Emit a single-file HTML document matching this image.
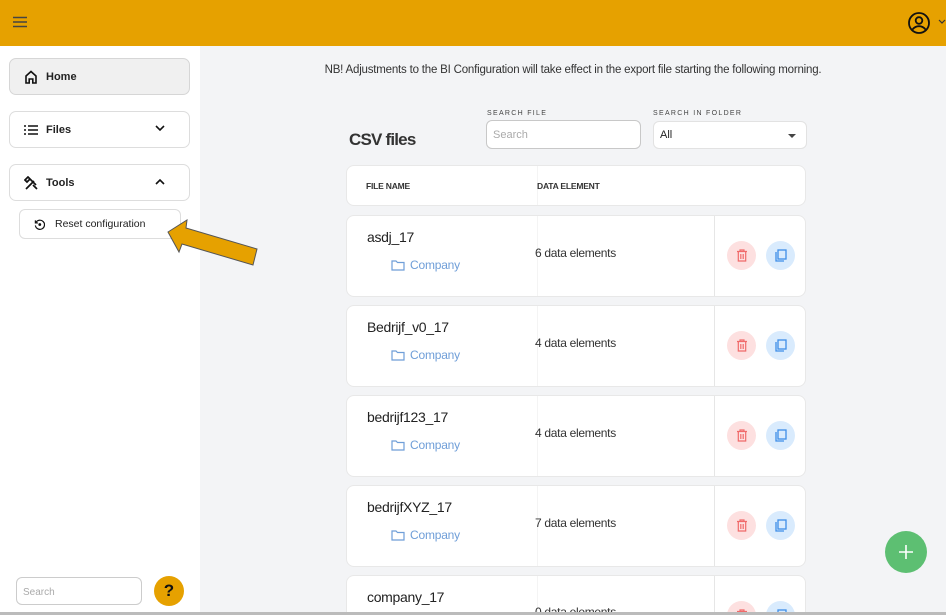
<!DOCTYPE html>
<html style="width:946px;height:615px;overflow:hidden"><head><meta charset="utf-8"><style>
*{box-sizing:border-box;margin:0;padding:0}
body{width:946px;height:615px;overflow:hidden;font-family:"Liberation Sans",sans-serif;background:#f3f4f6;position:relative;color:#222}
.top{position:absolute;left:0;top:0;width:946px;height:46px;background:#e6a100}
.side{position:absolute;left:0;top:46px;width:200px;height:566px;background:#fff}
.nav{position:absolute;left:9px;width:181px;height:37px;border:1px solid #ddd;border-radius:7px;background:#fff;font-size:11px;font-weight:bold;display:flex;align-items:center;padding-left:14px}
.nav svg{margin-right:8px}
.chev{position:absolute;right:16px;top:13px}
.abs{position:absolute}
.card{position:absolute;left:346px;width:460px;background:#fff;border-radius:8px;border:1px solid #e8e8e8;overflow:hidden}
.row{height:82px}
.name{position:absolute;left:20px;top:13px;font-size:14px;color:#222;letter-spacing:-0.3px}
.folder{position:absolute;left:44px;top:42px;font-size:12px;color:#6f9ed8;display:flex;align-items:center;letter-spacing:-0.2px}
.folder svg{margin-right:5px}
.de{position:absolute;left:188px;top:30px;font-size:12px;color:#333;letter-spacing:-0.3px}
.vl{position:absolute;left:190px;top:0;bottom:0;width:1px;background:#f4f4f4}
.vl2{position:absolute;left:367px;top:0;bottom:0;width:1px;background:#e6e6e6}
.del{position:absolute;left:380px;top:25px;width:29px;height:29px;border-radius:50%;background:#fde0e0;display:flex;align-items:center;justify-content:center}
.cp{position:absolute;left:419px;top:25px;width:29px;height:29px;border-radius:50%;background:#d9ebfd;display:flex;align-items:center;justify-content:center}
.lbl{position:absolute;font-size:7px;letter-spacing:1.3px;color:#444}
#clip{position:absolute;left:0;top:0;width:946px;height:612px;overflow:hidden}
</style></head><body>
<div id="clip">
<div class="top">
<svg class="abs" style="left:12px;top:16px" width="16" height="12" viewBox="0 0 16 12"><path d="M1 1.5h14M1 6h14M1 10.5h14" stroke="#444" stroke-width="1.4"/></svg>
<svg class="abs" style="left:907px;top:11px" width="24" height="24" viewBox="0 0 24 24" fill="none" stroke="#111" stroke-width="1.8"><circle cx="12" cy="12" r="10"/><circle cx="12" cy="9.5" r="3.3"/><path d="M5.5 18.5c2-2.5 4-3.3 6.5-3.3s4.5.8 6.5 3.3"/></svg>
<svg class="abs" style="left:938px;top:19px" width="8" height="6"><path d="M1 1l3 3 3-3" stroke="#333" fill="none" stroke-width="1.2"/></svg>
</div>
<div class="side">
<div class="nav" style="top:12px;background:#f0f0f0;border-color:#d6d6d6"><svg width="14" height="14" viewBox="0 0 14 14" fill="none" stroke="#111" stroke-width="1.6"><path d="M2 13V6l5-4.5L12 6v7H8.8V9H5.2v4z"/></svg>Home</div>
<div class="nav" style="top:65px"><svg width="14" height="12" viewBox="0 0 14 12" stroke="#111" stroke-width="1.4"><path d="M0 2h2M4 2h10M0 6h2M4 6h10M0 10h2M4 10h10"/></svg>Files<svg class="chev" width="10" height="7"><path d="M1 1l4 4 4-4" stroke="#111" fill="none" stroke-width="1.6"/></svg></div>
<div class="nav" style="top:118px"><svg width="14" height="14" viewBox="0 0 14 14" stroke="#111" stroke-width="1.7" fill="none"><path d="M2 13l8-8M5 2l7 7M4 1l-3 3 2 2 3-3zM9 9l4 4"/></svg>Tools<svg class="chev" width="10" height="7"><path d="M1 6l4-4 4 4" stroke="#111" fill="none" stroke-width="1.6"/></svg></div>
<div class="abs" style="left:19px;top:163px;width:162px;height:30px;border:1px solid #ddd;border-radius:6px;font-size:10.5px;display:flex;align-items:center;padding-left:14px"><svg width="11" height="11" viewBox="0 0 12 12" fill="none" stroke="#111" stroke-width="1.3" style="margin-right:10px"><path d="M2 4A5 5 0 1 1 1.5 7"/><path d="M1.5 1.5V4.3H4.3"/><circle cx="6.3" cy="6" r=".9" fill="#111"/></svg>Reset configuration</div>
<div class="abs" style="left:16px;top:531px;width:126px;height:28px;border:1px solid #ccc;border-radius:6px;font-size:10px;color:#aaa;padding:9px 0 0 6px">Search</div>
<div class="abs" style="left:154px;top:530px;width:30px;height:30px;border-radius:50%;background:#e6a100;font-size:17px;font-weight:bold;text-align:center;line-height:30px;color:#111">?</div>
</div>
<svg class="abs" style="left:165px;top:218px" width="95" height="50" viewBox="0 0 95 50"><path d="M3 14 L22 2 L21 10 L92 31 L88 47 L17 26 L14 34 Z" fill="#e6a100" stroke="#555" stroke-width="1"/></svg>
<div class="abs" style="left:200px;top:64px;width:746px;text-align:center;font-size:11.5px;color:#333;letter-spacing:-0.2px">NB! Adjustments to the BI Configuration will take effect in the export file starting the following morning.</div>
<div class="abs" style="left:349px;top:130px;font-size:17px;font-weight:bold;color:#333;letter-spacing:-0.8px">CSV files</div>
<div class="lbl" style="left:487px;top:110px">SEARCH FILE</div>
<div class="abs" style="left:486px;top:120px;width:155px;height:29px;border:1px solid #c8c8c8;border-radius:6px;background:#fff;font-size:11px;color:#aaa;padding:8px 6px">Search</div>
<div class="lbl" style="left:653px;top:110px">SEARCH IN FOLDER</div>
<div class="abs" style="left:653px;top:121px;width:154px;height:28px;border:1px solid #e2e2e2;border-radius:6px;background:#fff;font-size:11px;color:#222;padding:7px 6px">All<svg class="abs" style="right:10px;top:12px" width="8" height="4"><path d="M0 0h8L4 4z" fill="#444"/></svg></div>
<div class="card" style="top:165px;height:41px"><div class="vl"></div><div class="abs" style="left:19px;top:15px;font-size:8.5px;font-weight:bold;color:#333;letter-spacing:-0.2px">FILE NAME</div><div class="abs" style="left:190px;top:15px;font-size:8.5px;font-weight:bold;color:#333;letter-spacing:-0.2px">DATA ELEMENT</div></div>
<div class="card row" style="top:215px"><div class="vl"></div><div class="vl2"></div><div class="name">asdj_17</div><div class="folder"><svg width="14" height="11" viewBox="0 0 14 11" fill="none" stroke="#6f9ed8" stroke-width="1.2"><path d="M1 1h4l1.5 1.5H13V10H1z"/></svg>Company</div><div class="de">6 data elements</div><div class="del"><svg width="12" height="13" viewBox="0 0 12 13" fill="none" stroke="#f06a6a" stroke-width="1.2"><path d="M1 2.5h10M4 2.5V1h4v1.5M2.3 2.5V12h7.4V2.5M4.8 5v5M7.2 5v5"/></svg></div><div class="cp"><svg width="13" height="13" viewBox="0 0 13 13" fill="none" stroke="#3e8ee8" stroke-width="1.3"><rect x="4" y="1" width="8" height="9"/><path d="M2 3v9h8"/></svg></div></div>
<div class="card row" style="top:305px"><div class="vl"></div><div class="vl2"></div><div class="name">Bedrijf_v0_17</div><div class="folder"><svg width="14" height="11" viewBox="0 0 14 11" fill="none" stroke="#6f9ed8" stroke-width="1.2"><path d="M1 1h4l1.5 1.5H13V10H1z"/></svg>Company</div><div class="de">4 data elements</div><div class="del"><svg width="12" height="13" viewBox="0 0 12 13" fill="none" stroke="#f06a6a" stroke-width="1.2"><path d="M1 2.5h10M4 2.5V1h4v1.5M2.3 2.5V12h7.4V2.5M4.8 5v5M7.2 5v5"/></svg></div><div class="cp"><svg width="13" height="13" viewBox="0 0 13 13" fill="none" stroke="#3e8ee8" stroke-width="1.3"><rect x="4" y="1" width="8" height="9"/><path d="M2 3v9h8"/></svg></div></div>
<div class="card row" style="top:395px"><div class="vl"></div><div class="vl2"></div><div class="name">bedrijf123_17</div><div class="folder"><svg width="14" height="11" viewBox="0 0 14 11" fill="none" stroke="#6f9ed8" stroke-width="1.2"><path d="M1 1h4l1.5 1.5H13V10H1z"/></svg>Company</div><div class="de">4 data elements</div><div class="del"><svg width="12" height="13" viewBox="0 0 12 13" fill="none" stroke="#f06a6a" stroke-width="1.2"><path d="M1 2.5h10M4 2.5V1h4v1.5M2.3 2.5V12h7.4V2.5M4.8 5v5M7.2 5v5"/></svg></div><div class="cp"><svg width="13" height="13" viewBox="0 0 13 13" fill="none" stroke="#3e8ee8" stroke-width="1.3"><rect x="4" y="1" width="8" height="9"/><path d="M2 3v9h8"/></svg></div></div>
<div class="card row" style="top:485px"><div class="vl"></div><div class="vl2"></div><div class="name">bedrijfXYZ_17</div><div class="folder"><svg width="14" height="11" viewBox="0 0 14 11" fill="none" stroke="#6f9ed8" stroke-width="1.2"><path d="M1 1h4l1.5 1.5H13V10H1z"/></svg>Company</div><div class="de">7 data elements</div><div class="del"><svg width="12" height="13" viewBox="0 0 12 13" fill="none" stroke="#f06a6a" stroke-width="1.2"><path d="M1 2.5h10M4 2.5V1h4v1.5M2.3 2.5V12h7.4V2.5M4.8 5v5M7.2 5v5"/></svg></div><div class="cp"><svg width="13" height="13" viewBox="0 0 13 13" fill="none" stroke="#3e8ee8" stroke-width="1.3"><rect x="4" y="1" width="8" height="9"/><path d="M2 3v9h8"/></svg></div></div>
<div class="card" style="top:575px;height:37px;border-bottom:none;border-radius:8px 8px 0 0"><div class="vl"></div><div class="vl2"></div><div class="name">company_17</div><div class="de" style="top:29px">0 data elements</div><div class="del"><svg width="12" height="13" viewBox="0 0 12 13" fill="none" stroke="#f06a6a" stroke-width="1.2"><path d="M1 2.5h10M4 2.5V1h4v1.5M2.3 2.5V12h7.4V2.5M4.8 5v5M7.2 5v5"/></svg></div><div class="cp"><svg width="13" height="13" viewBox="0 0 13 13" fill="none" stroke="#3e8ee8" stroke-width="1.3"><rect x="4" y="1" width="8" height="9"/><path d="M2 3v9h8"/></svg></div></div>
<div class="abs" style="left:885px;top:531px;width:42px;height:42px;border-radius:50%;background:#5dbf72"><svg class="abs" style="left:14px;top:14px" width="14" height="14"><path d="M7 0v14M0 7h14" stroke="#fff" stroke-width="1.6"/></svg></div>
</div>
<div class="abs" style="left:0;top:612px;width:946px;height:3px;background:#bbb"></div>
</body></html>
